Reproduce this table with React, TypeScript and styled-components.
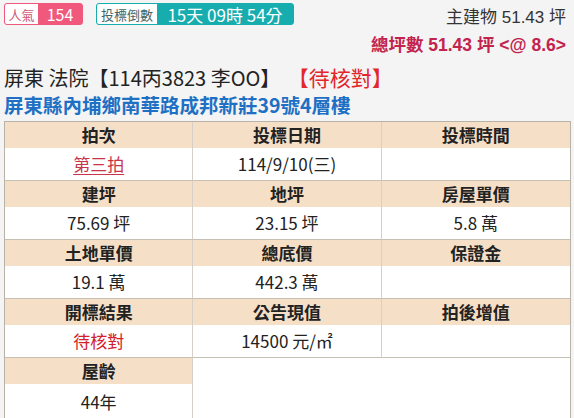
import React from "react";
import styled, { createGlobalStyle } from "styled-components";

const Global = createGlobalStyle`
  html, body { margin: 0; padding: 0; background: #f4f4f4; }
  body { font-family: "Noto Sans CJK TC", "Liberation Sans", sans-serif; color: #222; }
  * { box-sizing: border-box; }
`;

const Page = styled.div`
  width: 574px;
  height: 418px;
  overflow: hidden;
  padding: 3px 3px 0 4px;
  background: #f4f4f4;
`;

const TopBar = styled.div`
  display: flex;
  justify-content: space-between;
  align-items: flex-start;
`;

const Badges = styled.div`
  display: flex;
  gap: 13px;
`;

const Badge = styled.div<{ $c: string }>`
  display: flex;
  align-items: center;
  height: 22px;
  border: 1px solid ${(p) => p.$c};
  border-radius: 3px;
  background: ${(p) => p.$c};
`;

const BadgeLabel = styled.span<{ $c: string; $w: number }>`
  display: flex;
  align-items: center;
  justify-content: center;
  align-self: stretch;
  width: ${(p) => p.$w}px;
  background: #fff;
  border-radius: 2px 0 0 2px;
  color: ${(p) => p.$c};
  font-size: 13px;
  white-space: nowrap;
`;

const BadgeValue = styled.span<{ $w: number; $fs: number }>`
  display: flex;
  align-items: center;
  justify-content: center;
  width: ${(p) => p.$w}px;
  color: #fff;
  font-size: ${(p) => p.$fs}px;
  line-height: 1;
  white-space: nowrap;
`;

const Summary = styled.div`
  display: flex;
  flex-direction: column;
  align-items: flex-end;
  padding-right: 5px;
  font-family: "Liberation Sans", "Noto Sans CJK TC", sans-serif;
`;

const MainArea = styled.div`
  font-size: 17px;
  line-height: 30px;
  color: #333;
`;

const TotalArea = styled.div`
  font-size: 17.5px;
  line-height: 25px;
  font-weight: bold;
  color: #c2234f;
`;

const Title = styled.div`
  margin-top: 6px;
  font-size: 20px;
  line-height: 26px;
  color: #222;
  white-space: nowrap;
`;

const Status = styled.span`
  margin-left: 18px;
  color: #e3262a;
  font-size: 21px;
`;

const Address = styled.div`
  font-size: 19.5px;
  line-height: 27px;
  font-weight: bold;
  color: #1e70c4;
  white-space: nowrap;
`;

const Table = styled.div`
  margin-top: 3px;
  display: grid;
  grid-template-columns: repeat(3, 1fr);
  border: 1px solid #b9b2a8;
  border-bottom: none;
  background: #fff;
`;

const Field = styled.div<{ $last?: boolean }>`
  display: flex;
  flex-direction: column;
  border-right: ${(p) => (p.$last ? "none" : "1px solid #d6d0c8")};
  border-bottom: 1px solid #c6bfb4;
`;

const Head = styled.div`
  height: 26px;
  background: #f5dfc6;
  font-size: 17px;
  line-height: 26px;
  font-weight: bold;
  text-align: center;
  color: #222;
`;

const Value = styled.div<{ $color?: string; $link?: boolean; $tall?: boolean }>`
  height: ${(p) => (p.$tall ? 36 : 32)}px;
  font-size: 17px;
  line-height: ${(p) => (p.$tall ? 36 : 32)}px;
  text-align: center;
  color: ${(p) => p.$color || "#222"};
  text-decoration: ${(p) => (p.$link ? "underline" : "none")};
  text-underline-offset: 3px;
`;

const Filler = styled.div`
  grid-column: span 2;
  background: #fff;
`;

type Item = { h: string; v: string; color?: string; link?: boolean };

const items: Item[] = [
  { h: "拍次", v: "第三拍", color: "#c9344a", link: true },
  { h: "投標日期", v: "114/9/10(三)" },
  { h: "投標時間", v: "" },
  { h: "建坪", v: "75.69 坪" },
  { h: "地坪", v: "23.15 坪" },
  { h: "房屋單價", v: "5.8 萬" },
  { h: "土地單價", v: "19.1 萬" },
  { h: "總底價", v: "442.3 萬" },
  { h: "保證金", v: "" },
  { h: "開標結果", v: "待核對", color: "#d4202c" },
  { h: "公告現值", v: "14500 元/㎡" },
  { h: "拍後增值", v: "" },
  { h: "屋齡", v: "44年" },
];

export default function App() {
  return (
    <Page>
      <Global />
      <TopBar>
        <Badges>
          <Badge $c="#f0587c">
            <BadgeLabel $c="#d0587a" $w={33}>人氣</BadgeLabel>
            <BadgeValue $w={44} $fs={16}>154</BadgeValue>
          </Badge>
          <Badge $c="#17adaf">
            <BadgeLabel $c="#3f6668" $w={60}>投標倒數</BadgeLabel>
            <BadgeValue $w={136} $fs={17}>15天 09時 54分</BadgeValue>
          </Badge>
        </Badges>
        <Summary>
          <MainArea>主建物 51.43 坪</MainArea>
          <TotalArea>總坪數 51.43 坪 &lt;@ 8.6&gt;</TotalArea>
        </Summary>
      </TopBar>
      <Title>
        屏東 法院【114丙3823 李OO】<Status>【待核對】</Status>
      </Title>
      <Address>屏東縣內埔鄉南華路成邦新莊39號4層樓</Address>
      <Table>
        {items.map((it, i) => (
          <Field key={it.h} $last={i % 3 === 2}>
            <Head>{it.h}</Head>
            <Value $color={it.color} $link={it.link} $tall={i === 12}>
              {it.v}
            </Value>
          </Field>
        ))}
        <Filler />
      </Table>
    </Page>
  );
}
